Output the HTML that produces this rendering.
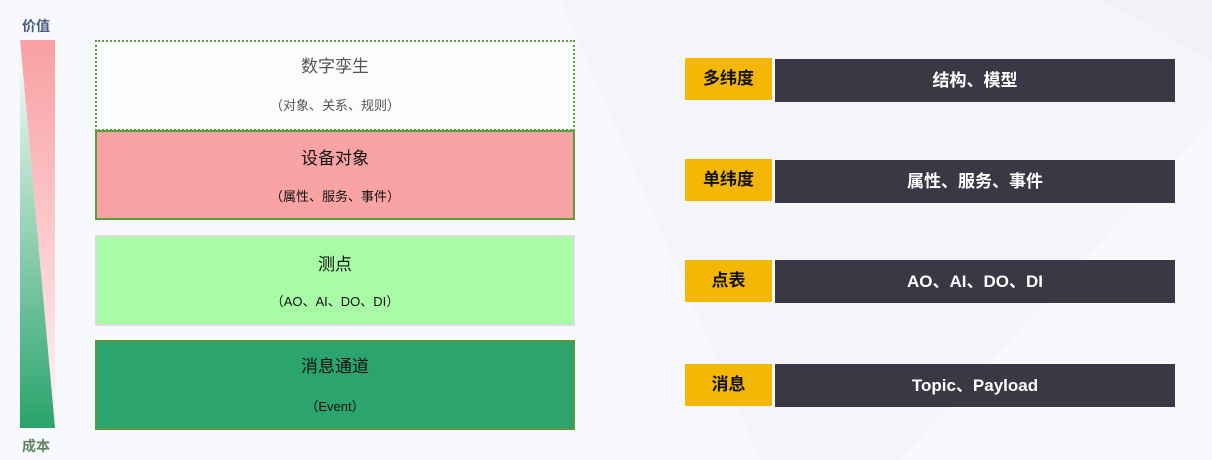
<!DOCTYPE html>
<html><head><meta charset="utf-8"><style>
body{margin:0;width:1212px;height:460px;overflow:hidden;background:#f8f9fc;position:relative;font-family:"Liberation Sans","Noto Sans CJK SC",sans-serif}
.a{position:absolute}
.box{position:absolute;left:95px;width:480px;box-sizing:border-box;text-align:center;color:#111}
.box .t{position:absolute;left:0;right:0;font-size:17px}
.box .s{position:absolute;left:0;right:0;font-size:13px}
.y{position:absolute;left:685px;width:87px;height:42px;background:#f5b705;color:#111;font-weight:bold;font-size:17px;line-height:42px;text-align:center}
.d{position:absolute;left:775px;width:400px;height:43px;background:#393844;color:#fff;font-weight:bold;font-size:17px;line-height:43px;text-align:center}
</style></head><body>
<svg class="a" style="left:0;top:0" width="1212" height="460">
<polygon points="560,0 1212,0 1212,120 900,460 760,460" fill="#f4f5f9"/>
<polygon points="1100,0 1212,0 1212,60" fill="#f0f2f7"/>
<defs>
<linearGradient id="p" x1="0" y1="0" x2="0" y2="1"><stop offset="0" stop-color="#f8a0a3"/><stop offset="1" stop-color="#fff4f5"/></linearGradient>
<linearGradient id="g" x1="0" y1="0" x2="0" y2="1"><stop offset="0" stop-color="#ffffff"/><stop offset="1" stop-color="#28a36b"/></linearGradient>
</defs>
<polygon points="20,40 55,40 55,428" fill="url(#p)"/>
<polygon points="20,40 55,428 20,428" fill="url(#g)"/>
</svg>
<div class="a" style="left:22px;top:16px;font-size:14px;font-weight:bold;color:#4a5a86">价值</div>
<div class="a" style="left:22px;top:436px;font-size:14px;font-weight:bold;color:#5e8460">成本</div>

<div class="box" style="top:40px;height:91px;border:2px dotted #5a9e3a;background:#fbfcfe;color:#555"><div class="t" style="top:10px">数字孪生</div><div class="s" style="top:53px">（对象、关系、规则）</div></div>
<div class="box" style="top:130px;height:90px;border:2px solid #5a9e3a;background:#f9a3a4"><div class="t" style="top:12px">设备对象</div><div class="s" style="top:54px">（属性、服务、事件）</div></div>
<div class="box" style="top:235px;height:91px;border:2px solid #dcdcdc;background:#a8fca6"><div class="t" style="top:13px">测点</div><div class="s" style="top:54px">（AO、AI、DO、DI）</div></div>
<div class="box" style="top:340px;height:90px;border:2px solid #5a9a3a;background:#2ba46e"><div class="t" style="top:10px">消息通道</div><div class="s" style="top:54px">（Event）</div></div>

<div class="y" style="top:58px">多纬度</div><div class="d" style="top:59px">结构、模型</div>
<div class="y" style="top:159px">单纬度</div><div class="d" style="top:160px">属性、服务、事件</div>
<div class="y" style="top:260px">点表</div><div class="d" style="top:260px">AO、AI、DO、DI</div>
<div class="y" style="top:364px">消息</div><div class="d" style="top:364px">Topic、Payload</div>
</body></html>
